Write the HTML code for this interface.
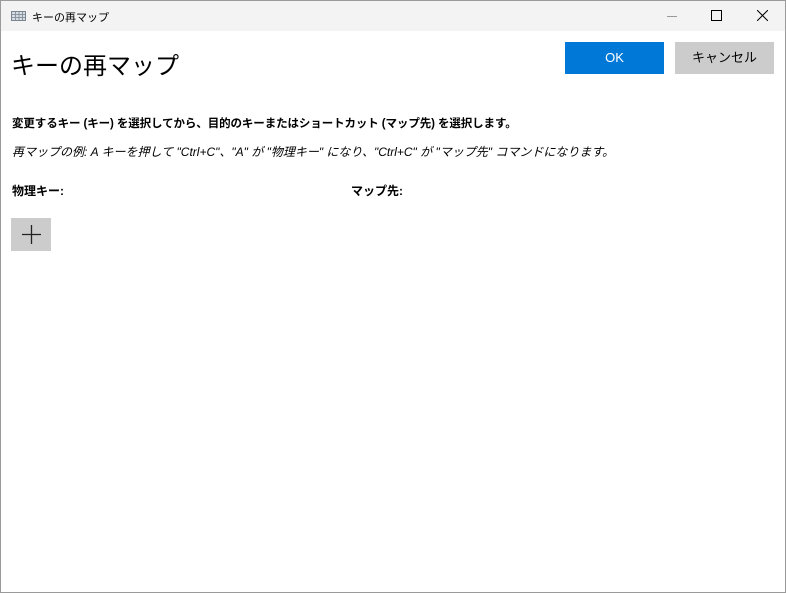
<!DOCTYPE html>
<html><head><meta charset="utf-8"><style>
body{margin:0;width:786px;height:593px;overflow:hidden;background:#fff;font-family:"Liberation Sans","Noto Sans CJK JP",sans-serif;color:#000;position:relative}
.win{position:absolute;left:0;top:0;width:784px;height:591px;border:1px solid #9a9a9a}
.tb{position:absolute;left:0;top:0;width:784px;height:30px;background:#f3f3f3}
.t{position:absolute;white-space:nowrap}
.btn{position:absolute;top:41px;height:32px;width:99px;text-align:center;line-height:32px;font-size:13px}
</style></head><body>
<div class="win">
<div class="tb">
<svg style="position:absolute;left:10px;top:10px" width="15" height="10"><rect x="0.5" y="0.5" width="14" height="9" fill="#d8dde3" stroke="#7a8592"/><path d="M1 3.5H14M1 6.5H14M4.5 1V9M8 1V9M11.5 1V9" stroke="#8a95a2" stroke-width="1"/></svg>
<div class="t" style="left:31px;top:8px;font-size:11px">キーの再マップ</div>
<div style="position:absolute;left:666px;top:15px;width:10px;height:1px;background:#999"></div>
<div style="position:absolute;left:710px;top:9px;width:9px;height:9px;border:1px solid #000"></div>
<svg style="position:absolute;left:756px;top:9px" width="11" height="11"><path d="M0 0L11 11M11 0L0 11" stroke="#000" stroke-width="1"/></svg>
</div>
<div class="t" style="left:10px;top:45px;font-size:24px">キーの再マップ</div>
<div class="btn" style="left:564px;background:#0078d7;color:#fff">OK</div>
<div class="btn" style="left:674px;background:#cccccc">キャンセル</div>
<div class="t" style="left:11px;top:114px;font-size:11.5px;font-weight:bold;letter-spacing:-0.1px">変更するキー (キー) を選択してから、目的のキーまたはショートカット (マップ先) を選択します。</div>
<div class="t" style="left:11px;top:142px;font-size:12px;font-style:italic">再マップの例: A キーを押して "Ctrl+C"、"A" が "物理キー" になり、"Ctrl+C" が "マップ先" コマンドになります。</div>
<div class="t" style="left:11px;top:181px;font-size:12px;font-weight:bold">物理キー:</div>
<div class="t" style="left:350px;top:181px;font-size:12px;font-weight:bold">マップ先:</div>
<div style="position:absolute;left:10px;top:217px;width:40px;height:33px;background:#cccccc"></div>
<svg style="position:absolute;left:20px;top:223px" width="21" height="21"><path d="M10.5 1V20M1 10.5H20" stroke="#222" stroke-width="1.3"/></svg>
</div>
</body></html>
